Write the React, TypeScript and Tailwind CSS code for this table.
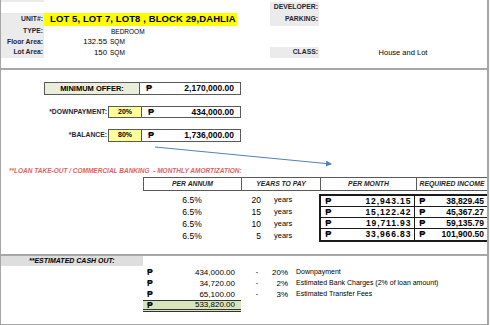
import React from 'react';

const font = "font-['Liberation_Sans','DejaVu_Sans',Arial,sans-serif]";

function Peso({ className = '' }: { className?: string }) {
  return <span className={`font-bold leading-none ${className}`}>₱</span>;
}

const amortization = [
  { rate: '6.5%', years: '20', month: '12,943.15', income: '38,829.45' },
  { rate: '6.5%', years: '15', month: '15,122.42', income: '45,367.27' },
  { rate: '6.5%', years: '10', month: '19,711.93', income: '59,135.79' },
  { rate: '6.5%', years: '5', month: '33,966.83', income: '101,900.50' },
];

const cashOut = [
  { amount: '434,000.00', pct: '20%', label: 'Downpayment' },
  { amount: '34,720.00', pct: '2%', label: 'Estimated Bank Charges (2% of loan amount)' },
  { amount: '65,100.00', pct: '3%', label: 'Estimated Transfer Fees' },
];

export default function App() {
  return (
    <div className={`relative w-[490px] h-[325px] overflow-hidden bg-white text-black ${font}`}>
      <div className="w-[489px] h-[325px] border-l border-r-2 border-[#a6a6a6]">
        {/* property details */}
        <div className="flex h-[2px]">
          <div className="w-[43px] bg-[#ebebeb]" />
        </div>
        <div className="flex h-[11px] items-center">
          <div className="w-[269px]" />
          <div className="w-[49px] h-full bg-[#ebebeb] flex items-center justify-end pr-[1px] text-[6.8px] font-bold text-[#1f1f3a]">DEVELOPER:</div>
        </div>
        <div className="flex h-[13px]">
          <div className="w-[43px] bg-[#ebebeb] flex items-center justify-end pr-[1px] text-[6.8px] font-bold text-[#1f1f3a]">UNIT#:</div>
          <div className="w-[193px] bg-[#ffff00] flex items-center pl-[6px] text-[9.5px] font-bold tracking-[0.1px]">LOT 5, LOT 7, LOT8 , BLOCK 29,DAHLIA</div>
          <div className="w-[33px]" />
          <div className="w-[49px] bg-[#ebebeb] flex items-center justify-end pr-[1px] text-[6.8px] font-bold text-[#1f1f3a]">PARKING:</div>
        </div>
        <div className="flex h-[11px]">
          <div className="w-[43px] bg-[#ebebeb] flex items-center justify-end pr-[1px] text-[6.8px] font-bold text-[#1f1f3a]">TYPE:</div>
          <div className="w-[67px]" />
          <div className="flex items-center text-[6.5px]">BEDROOM</div>
        </div>
        <div className="flex h-[10px]">
          <div className="w-[43px] bg-[#ebebeb] flex items-center justify-end pr-[1px] text-[6.8px] font-bold text-[#1f1f3a]">Floor Area:</div>
          <div className="w-[63px] flex items-center justify-end text-[7.8px]">132.55</div>
          <div className="flex items-center pl-[3px] text-[6.5px]">SQM</div>
        </div>
        <div className="flex h-[11px]">
          <div className="w-[43px] bg-[#ebebeb] flex items-center justify-end pr-[1px] text-[6.8px] font-bold text-[#1f1f3a]">Lot Area:</div>
          <div className="w-[63px] flex items-center justify-end text-[7.8px]">150</div>
          <div className="w-[163px] flex items-center pl-[3px] text-[6.5px]">SQM</div>
          <div className="w-[49px] bg-[#ebebeb] flex items-center justify-end pr-[1px] text-[6.8px] font-bold text-[#1f1f3a]">CLASS:</div>
          <div className="w-[168px] flex items-center justify-center text-[7.5px]">House and Lot</div>
        </div>
        <div className="h-[10px]" />
        <div className="h-[2px] bg-[#a6a6a6]" />

        {/* offer */}
        <div className="h-[12px]" />
        <div className="flex h-[13px]">
          <div className="w-[43px]" />
          <div className="w-[197px] flex border border-[#595959]">
            <div className="w-[95px] bg-[#e9eddc] flex items-center justify-center text-[7.5px] font-bold border-r border-[#595959]">MINIMUM OFFER:</div>
            <div className="flex-1 flex items-center justify-between px-[6px] text-[8.5px] font-bold">
              <Peso className="text-[9px]" />
              <span>2,170,000.00</span>
            </div>
          </div>
        </div>
        <div className="h-[11px]" />
        <div className="flex h-[12px]">
          <div className="w-[107px] flex items-center justify-end pr-[1px] text-[6.8px] font-bold text-[#1f1f3a]">*DOWNPAYMENT:</div>
          <div className="w-[34px] bg-[#ffff99] border border-[#595959] flex items-center justify-center text-[7px] font-bold">20%</div>
          <div className="w-[99px] border border-l-0 border-[#595959] flex items-center justify-between px-[6px] text-[8.5px] font-bold">
            <Peso className="text-[9px]" />
            <span>434,000.00</span>
          </div>
        </div>
        <div className="h-[11px]" />
        <div className="flex h-[13px]">
          <div className="w-[107px] flex items-center justify-end pr-[1px] text-[6.8px] font-bold text-[#1f1f3a]">*BALANCE:</div>
          <div className="w-[34px] bg-[#ffff99] border border-[#595959] flex items-center justify-center text-[7px] font-bold">80%</div>
          <div className="w-[99px] border border-l-0 border-[#595959] flex items-center justify-between px-[6px] text-[8.5px] font-bold">
            <Peso className="text-[9px]" />
            <span>1,736,000.00</span>
          </div>
        </div>

        {/* amortization */}
        <div className="h-[23px]" />
        <div className="h-[11px] flex items-center pl-[8px] text-[6.5px] font-bold italic text-[#df5f5f]">
          **LOAN TAKE-OUT / COMMERCIAL BANKING&nbsp; - MONTHLY AMORTIZATION:
        </div>
        <div className="h-[1px]" />
        <div className="flex h-[14px]">
          <div className="w-[142px]" />
          <div className="flex flex-1 border-t border-b border-l border-[#595959] text-[6.8px] font-bold italic text-[#262626]">
            <div className="w-[98px] flex items-center justify-center border-r border-[#595959]">PER ANNUM</div>
            <div className="w-[79px] flex items-center justify-center border-r border-[#595959]">YEARS TO PAY</div>
            <div className="w-[96px] flex items-center justify-center border-r border-[#595959]">PER MONTH</div>
            <div className="flex-1 flex items-center justify-center">REQUIRED INCOME</div>
          </div>
        </div>
        <div className="h-[3px]" />
        <div className="flex">
          <div className="w-[319px] flex flex-col">
            {amortization.map((r) => (
              <div key={r.years} className="flex h-[12px] text-[8.5px]">
                <div className="w-[142px]" />
                <div className="w-[98px] flex items-center justify-center">{r.rate}</div>
                <div className="w-[20px] flex items-center justify-end">{r.years}</div>
                <div className="flex items-center pl-[13px] text-[7.5px]">years</div>
              </div>
            ))}
          </div>
          <div className="w-[168px] flex flex-col border-2 border-r-0 border-[#1a1a1a]">
            {amortization.map((r, i) => (
              <div key={r.years} className={`flex h-[11px] ${i < 3 ? 'border-b border-[#1a1a1a]' : ''}`}>
                <div className="w-[94px] flex items-center justify-between pl-[4px] pr-[3px] border-r border-[#1a1a1a] font-bold">
                  <Peso className="text-[9px]" />
                  <span className="text-[8.5px] tracking-[0.9px]">{r.month}</span>
                </div>
                <div className="flex-1 flex items-center justify-between pl-[4px] pr-[3px] font-bold">
                  <Peso className="text-[9px]" />
                  <span className="text-[8.5px]">{r.income}</span>
                </div>
              </div>
            ))}
          </div>
        </div>

        {/* cash out */}
        <div className="h-[12px]" />
        <div className="h-[2px] bg-[#a6a6a6]" />
        <div className="flex h-[10px]">
          <div className="w-[142px] bg-[#dedede] flex items-center pl-[28px] text-[7px] font-bold italic">**ESTIMATED CASH OUT:</div>
        </div>
        <div className="h-[1px]" />
        {cashOut.map((c) => (
          <div key={c.label} className="flex h-[11px] text-[8px]">
            <div className="w-[142px]" />
            <div className="w-[98px] flex items-center justify-between pl-[4px] pr-[6px]">
              <Peso className="text-[8.5px]" />
              <span>{c.amount}</span>
            </div>
            <div className="w-[17px] flex items-center justify-end text-[7px]">-</div>
            <div className="w-[30px] flex items-center justify-end">{c.pct}</div>
            <div className="flex items-center pl-[8px] text-[7px]">{c.label}</div>
          </div>
        ))}
        <div className="flex h-[12px] text-[8px]">
          <div className="w-[142px]" />
          <div className="w-[98px] flex items-center justify-between pl-[4px] pr-[6px] bg-[#d8e4bc] border-t border-b-[3px] border-double border-[#333]">
            <Peso className="text-[8.5px]" />
            <span>533,820.00</span>
          </div>
        </div>
        <div className="h-[12px]" />
        <div className="h-[2px] bg-[#a6a6a6]" />
      </div>

      {/* arrow drawn over the sheet */}
      <svg className="absolute left-0 top-0 pointer-events-none" width="490" height="325">
        <defs>
          <marker id="ah" markerWidth="6" markerHeight="6" refX="5" refY="3" orient="auto">
            <path d="M0,0 L6,3 L0,6 Z" fill="#4f81bd" />
          </marker>
        </defs>
        <line x1="155" y1="147" x2="331" y2="164" stroke="#4f81bd" strokeWidth="1" markerEnd="url(#ah)" />
      </svg>
    </div>
  );
}
